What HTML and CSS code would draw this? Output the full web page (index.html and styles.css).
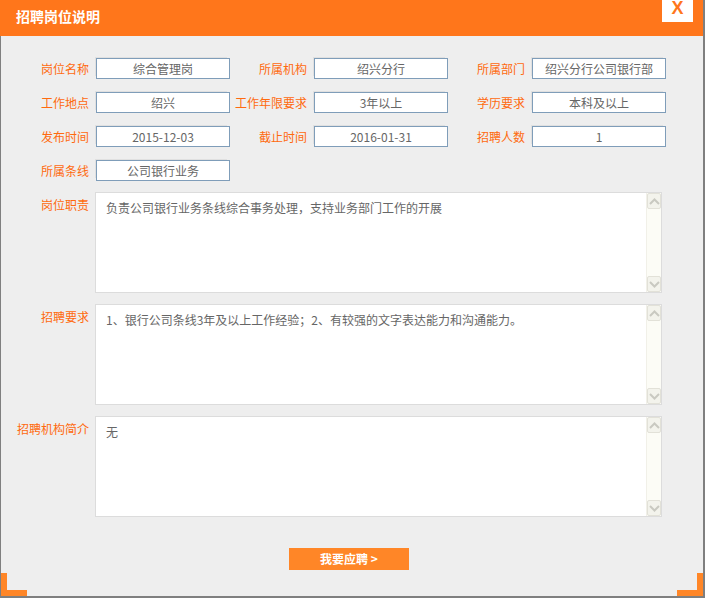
FILE: index.html
```html
<!DOCTYPE html>
<html lang="zh-CN">
<head>
<meta charset="utf-8">
<title>招聘岗位说明</title>
<link rel="stylesheet" href="styles.css">
</head>
<body>
<div class="dialog">
  <div class="header">
    <span class="title">招聘岗位说明</span>
    <span class="close">X</span>
  </div>
  <div class="body">
    <div class="grid">
      <div class="lbl">岗位名称</div><div class="box">综合管理岗</div>
      <div class="lbl">所属机构</div><div class="box">绍兴分行</div>
      <div class="lbl">所属部门</div><div class="box">绍兴分行公司银行部</div>

      <div class="lbl">工作地点</div><div class="box">绍兴</div>
      <div class="lbl">工作年限要求</div><div class="box">3年以上</div>
      <div class="lbl">学历要求</div><div class="box">本科及以上</div>

      <div class="lbl">发布时间</div><div class="box">2015-12-03</div>
      <div class="lbl">截止时间</div><div class="box">2016-01-31</div>
      <div class="lbl">招聘人数</div><div class="box">1</div>

      <div class="lbl">所属条线</div><div class="box">公司银行业务</div>
    </div>

    <div class="areas">
      <div class="arow">
        <div class="alabel">岗位职责</div>
        <div class="area">
          <div class="atext">负责公司银行业务条线综合事务处理，支持业务部门工作的开展</div>
          <div class="sb">
            <div class="sbtn"><svg width="11" height="7" viewBox="0 0 11 7"><path d="M1 6 L5.5 1.5 L10 6" fill="none" stroke="#c9c9c1" stroke-width="2"/></svg></div>
            <div class="strack"></div>
            <div class="sbtn"><svg width="11" height="7" viewBox="0 0 11 7"><path d="M1 1 L5.5 5.5 L10 1" fill="none" stroke="#c9c9c1" stroke-width="2"/></svg></div>
          </div>
        </div>
      </div>
      <div class="arow">
        <div class="alabel">招聘要求</div>
        <div class="area">
          <div class="atext">1、银行公司条线3年及以上工作经验；2、有较强的文字表达能力和沟通能力。</div>
          <div class="sb">
            <div class="sbtn"><svg width="11" height="7" viewBox="0 0 11 7"><path d="M1 6 L5.5 1.5 L10 6" fill="none" stroke="#c9c9c1" stroke-width="2"/></svg></div>
            <div class="strack"></div>
            <div class="sbtn"><svg width="11" height="7" viewBox="0 0 11 7"><path d="M1 1 L5.5 5.5 L10 1" fill="none" stroke="#c9c9c1" stroke-width="2"/></svg></div>
          </div>
        </div>
      </div>
      <div class="arow">
        <div class="alabel">招聘机构简介</div>
        <div class="area">
          <div class="atext">无</div>
          <div class="sb">
            <div class="sbtn"><svg width="11" height="7" viewBox="0 0 11 7"><path d="M1 6 L5.5 1.5 L10 6" fill="none" stroke="#c9c9c1" stroke-width="2"/></svg></div>
            <div class="strack"></div>
            <div class="sbtn"><svg width="11" height="7" viewBox="0 0 11 7"><path d="M1 1 L5.5 5.5 L10 1" fill="none" stroke="#c9c9c1" stroke-width="2"/></svg></div>
          </div>
        </div>
      </div>
    </div>

    <div class="actions">
      <div class="apply">我要应聘 &gt;</div>
    </div>

    <div class="corner corner-l"></div>
    <div class="corner corner-r"></div>
  </div>
</div>
</body>
</html>
```

FILE: styles.css
```css
* { box-sizing: border-box; }
html, body { margin: 0; padding: 0; }
body {
  width: 705px;
  height: 598px;
  overflow: hidden;
  background: #eeeeee;
  font-family: "Noto Sans CJK SC", "Noto Sans", sans-serif;
  font-size: 12px;
}
.dialog {
  width: 705px;
  height: 598px;
  display: flex;
  flex-direction: column;
  border-right: 2px solid #7f7f7f;
  border-bottom: 2px solid #7f7f7f;
  background: #eeeeee;
}
.header {
  height: 36px;
  flex: none;
  background: #ff761b;
  display: flex;
  justify-content: space-between;
  align-items: flex-start;
  padding-left: 16px;
  padding-right: 10px;
}
.title {
  color: #ffffff;
  font-weight: bold;
  font-size: 14px;
  line-height: 33px;
}
.close {
  width: 31px;
  height: 22px;
  background: #ffffff;
  color: #ff761b;
  font-family: "Liberation Sans", Arial, sans-serif;
  font-weight: bold;
  font-size: 18px;
  line-height: 16px;
  text-align: center;
}
.body {
  position: relative;
  flex: 1;
  border-left: 1px solid #7f7f7f;
  padding-top: 22px;
}
.grid {
  display: grid;
  grid-template-columns: 95px 134px 84px 134px 84px 134px;
  grid-auto-rows: 21px;
  row-gap: 13px;
  align-items: center;
}
.lbl {
  color: #ff6a0e;
  text-align: right;
  padding-right: 7px;
  white-space: nowrap;
}
.box {
  height: 21px;
  border: 1px solid #7f9db9;
  background: #ffffff;
  color: #666666;
  text-align: center;
  line-height: 19px;
  white-space: nowrap;
  overflow: hidden;
  box-shadow: -2px -2px 0 -1px #e0e0e0;
}
.areas {
  margin-top: 11px;
  display: flex;
  flex-direction: column;
  gap: 11px;
}
.arow {
  display: flex;
  align-items: flex-start;
}
.alabel {
  width: 94px;
  flex: none;
  color: #ff6a0e;
  text-align: right;
  padding-right: 6px;
  padding-top: 3px;
  line-height: 20px;
  white-space: nowrap;
}
.area {
  width: 567px;
  height: 101px;
  border: 1px solid #dcdcdc;
  background: #ffffff;
  display: flex;
}
.atext {
  flex: 1;
  padding: 5px 10px 0 10px;
  line-height: 20px;
  color: #666666;
}
.sb {
  width: 15px;
  flex: none;
  display: flex;
  flex-direction: column;
  background: #fcfcf6;
  border-left: 1px solid #f1f0e8;
}
.sbtn {
  height: 16px;
  flex: none;
  background: #f3f3ec;
  border: 1px solid #e2e1d8;
  border-radius: 2px;
  display: flex;
  align-items: center;
  justify-content: center;
}
.strack { flex: 1; }
.actions {
  margin-top: 31px;
  padding-left: 288px;
  display: flex;
}
.apply {
  width: 120px;
  height: 22px;
  background: #ff8627;
  color: #ffffff;
  font-weight: bold;
  text-align: center;
  line-height: 22px;
}
.corner {
  position: absolute;
  bottom: 0;
  width: 26px;
  height: 23px;
  border-bottom: 6px solid #ff8627;
}
.corner-l {
  left: 0;
  border-left: 6px solid #ff8627;
}
.corner-r {
  right: 0;
  border-right: 6px solid #ff8627;
}
```
